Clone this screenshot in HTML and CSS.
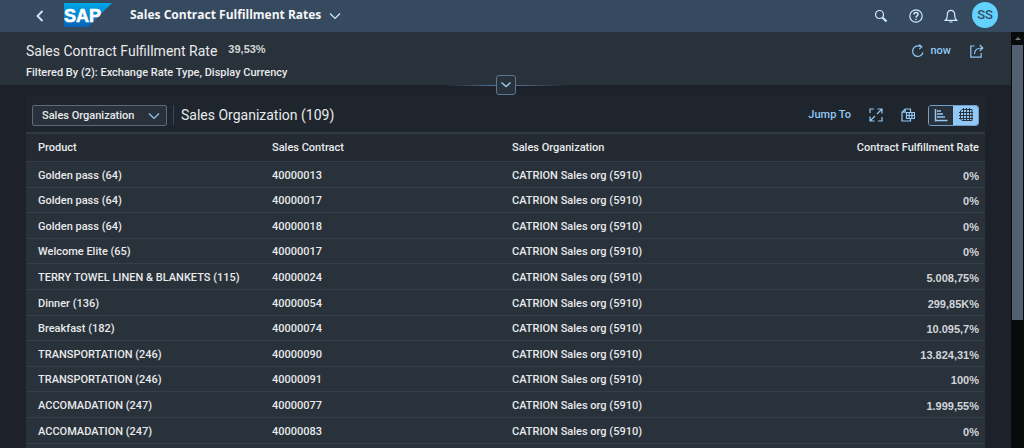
FILE: index.html
```html
<!DOCTYPE html>
<html lang="en">
<head>
<meta charset="utf-8">
<title>Sales Contract Fulfillment Rates</title>
<link rel="stylesheet" href="styles.css">
</head>
<body>
<header class="shell">
  <button class="icon-btn back" aria-label="Back"><svg width="10" height="14" viewBox="0 0 10 14"><path d="M7.500 2 2.500 7l5 5" stroke-width="1.800"/></svg></button>
  <a class="logo" href="#" aria-label="Home"><svg width="48" height="24" viewBox="0 0 48 24">
    <defs><linearGradient id="sap" x1="0" y1="0" x2="0" y2="1"><stop offset="0" stop-color="#00a8e8"/><stop offset="1" stop-color="#0a62b8"/></linearGradient></defs>
    <path class="logo-shape" d="M0 0h48L24 24H0z"/><text x="0" y="19">SAP</text></svg></a>
  <button class="app-title">Sales Contract Fulfillment Rates<svg width="12" height="8" viewBox="0 0 12 8"><path d="m1 1.500 5 5 5-5"/></svg></button>
  <nav class="shell-actions" aria-label="Shell">
    <button class="icon-btn" aria-label="Search"><svg width="14" height="14" viewBox="0 0 14 14"><circle cx="5.500" cy="5.500" r="4"/><path d="m8.500 8.500 4 4" stroke-width="2.200"/></svg></button>
    <button class="icon-btn" aria-label="Help"><svg width="14" height="14" viewBox="0 0 14 14"><circle cx="7" cy="7" r="6.200"/><path d="M5 5.500C5 2.800 9.100 2.900 9.100 5.300 9.100 6.900 7 6.700 7 8.500M7 9.700v1.400" stroke-width="1.500"/></svg></button>
    <button class="icon-btn" aria-label="Notifications"><svg width="14" height="14" viewBox="0 0 14 14"><path d="M1.500 11.300C3.500 9.500 3.200 8 3.300 5.500 3.500 2.600 5 1.300 7 1.300s3.500 1.300 3.700 4.200c.1 2.500-.2 4 1.800 5.800zM5.500 13h3"/></svg></button>
    <button class="avatar" aria-label="User SS">SS</button>
  </nav>
</header>
<div class="viewport">
  <main class="content">
    <section class="page-head">
      <div class="page-info">
        <h1>Sales Contract Fulfillment Rate <span class="kpi">39,53%</span></h1>
        <p>Filtered By (2): Exchange Rate Type, Display Currency</p>
      </div>
      <div class="page-actions">
        <button class="link-btn"><svg width="14" height="14" viewBox="0 0 14 14"><path d="M12 8.500A5.300 5.300 0 1 1 9.500 2.500M8.200.6l2.600 2.200-2.500 2.300"/></svg>now</button>
        <button class="link-btn" aria-label="Share"><svg width="14" height="14" viewBox="0 0 14 14"><path d="M4.500 2H.8v11.200h10.400V9M4.500 10c0-4 2.500-6 7.500-6M9.800 1l3 3-3 3"/></svg></button>
      </div>
      <button class="expander" aria-label="Expand header"><svg width="12" height="8" viewBox="0 0 12 8"><path d="m1.500 1.500 4.500 4 4.500-4" stroke-width="1.500"/></svg></button>
    </section>
    <section class="card">
      <div class="toolbar">
        <span class="select-wrap"><select aria-label="Group by"><option>Sales Organization</option></select><svg width="12" height="8" viewBox="0 0 12 8"><path d="m1 1.500 5 5 5-5"/></svg></span>
        <h2>Sales Organization (109)</h2>
        <div class="tools">
          <button class="link-btn">Jump To</button>
          <button class="link-btn" aria-label="Full screen"><svg width="14" height="14" viewBox="0 0 14 14"><path d="M5 1H1v4M9 13h4V9M8 6l4.500-4.500M8.500 1H13v4.500M6 8l-4.500 4.500M1 8.500V13h4.500"/></svg></button>
          <button class="link-btn" aria-label="Export"><svg width="14" height="14" viewBox="0 0 14 14"><path d="M9.500 10.500v2.500H1V4.200L4.200 1H9.500v3M4.200 1v3.200H1M5.500 4.500h8v6h-8zM5.500 7.500h8M8.200 4.500v6M10.900 4.500v6"/></svg></button>
          <div class="segmented">
            <button aria-label="Chart view"><svg width="14" height="14" viewBox="0 0 14 14"><path d="M1.500 1v12.500M1 12.500h12.500M3 3h4M3 6h6M3 9h8" stroke-width="1.500"/></svg></button>
            <button class="selected" aria-label="Table view" aria-pressed="true"><svg width="14" height="14" viewBox="0 0 14 14"><path d="M3 1.500h10v11H3L1.500 11V3zM0 4.500h14M0 7.500h14M0 10.500h14M4.500 0v13M7.500 0v13M10.500 0v13" stroke-width="1"/></svg></button>
          </div>
        </div>
      </div>
      <table>
        <thead><tr><th class="c-product">Product</th><th class="c-contract">Sales Contract</th><th>Sales Organization</th><th class="num">Contract Fulfillment Rate</th></tr></thead>
        <tbody>
          <tr><td>Golden pass (64)</td><td>40000013</td><td>CATRION Sales org (5910)</td><td class="num">0%</td></tr>
          <tr><td>Golden pass (64)</td><td>40000017</td><td>CATRION Sales org (5910)</td><td class="num">0%</td></tr>
          <tr><td>Golden pass (64)</td><td>40000018</td><td>CATRION Sales org (5910)</td><td class="num">0%</td></tr>
          <tr><td>Welcome Elite (65)</td><td>40000017</td><td>CATRION Sales org (5910)</td><td class="num">0%</td></tr>
          <tr><td>TERRY TOWEL LINEN &amp; BLANKETS (115)</td><td>40000024</td><td>CATRION Sales org (5910)</td><td class="num">5.008,75%</td></tr>
          <tr><td>Dinner (136)</td><td>40000054</td><td>CATRION Sales org (5910)</td><td class="num">299,85K%</td></tr>
          <tr><td>Breakfast (182)</td><td>40000074</td><td>CATRION Sales org (5910)</td><td class="num">10.095,7%</td></tr>
          <tr><td>TRANSPORTATION (246)</td><td>40000090</td><td>CATRION Sales org (5910)</td><td class="num">13.824,31%</td></tr>
          <tr><td>TRANSPORTATION (246)</td><td>40000091</td><td>CATRION Sales org (5910)</td><td class="num">100%</td></tr>
          <tr><td>ACCOMADATION (247)</td><td>40000077</td><td>CATRION Sales org (5910)</td><td class="num">1.999,55%</td></tr>
          <tr><td>ACCOMADATION (247)</td><td>40000083</td><td>CATRION Sales org (5910)</td><td class="num">0%</td></tr>
        </tbody>
      </table>
    </section>
  </main>
  <div class="scrollbar" aria-hidden="true"><span class="arrow"></span><span class="thumb"></span></div>
</div>
</body>
</html>
```
FILE: styles.css
```css
* { box-sizing: border-box; }
body {
  margin: 0;
  height: 100vh;
  display: flex;
  flex-direction: column;
  overflow: hidden;
  background: #1d2129;
  color: #e8eaec;
  font: 500 11px/16px Roboto, "Liberation Sans", sans-serif;
}
h1, h2, p { margin: 0; }
button, select { font: inherit; color: inherit; background: none; border: 0; padding: 0; }
button { display: inline-flex; align-items: center; justify-content: center; cursor: pointer; }
svg { display: block; fill: none; stroke: currentColor; stroke-width: 1.2; }

.shell { display: flex; flex: none; align-items: center; height: 32px; padding: 0 26px; background: #354a5f; color: #d1e8ff; }
.icon-btn { width: 28px; height: 28px; }
.logo { margin: 0 18px 3px 10px; }
.logo svg { stroke: none; }
.logo-shape { fill: url(#sap); }
.logo text { fill: #fff; stroke: #fff; stroke-width: 0.6; font: 700 18px "Liberation Sans", sans-serif; }
.app-title { gap: 8px; margin-bottom: 2px; color: #f5f6f7; font: 700 12px/18px "Open Sans", sans-serif; }
.app-title svg { margin-top: 2px; color: #d1e8ff; }
.shell-actions { display: flex; align-items: center; gap: 7px; margin-left: auto; }
.avatar { width: 26px; height: 26px; margin-bottom: 3px; border-radius: 50%; background: #64d2ff; color: #354a5f; font-size: 13px; }

.viewport { display: flex; flex: 1; min-height: 0; }
.content { flex: 1; min-width: 0; overflow: hidden; }
.page-head { position: relative; display: flex; justify-content: space-between; height: 53px; padding: 9px 27px 0 26px; background: #29313a; }
h1 { display: flex; gap: 11px; font-size: 14px; font-weight: 400; line-height: 20px; }
.kpi { color: #d3d6d9; font: 700 11px/16px "Liberation Sans", sans-serif; }
.page-info p { margin-top: 4px; }
.page-actions { display: flex; gap: 19px; height: 20px; }
.link-btn { gap: 5px; color: #91c8f6; }
.expander { position: absolute; z-index: 1; left: 50%; bottom: -10px; width: 20px; height: 20px; transform: translateX(-50%); border: 1px solid #5b7690; border-radius: 3px; background: #29313a; color: #91c8f6; }
.expander::before, .expander::after { content: ""; position: absolute; top: 9px; width: 52px; height: 1px; }
.expander::before { right: 100%; background: linear-gradient(to left, #52789b, transparent); }
.expander::after { left: 100%; background: linear-gradient(to right, #52789b, transparent); }

.card { margin: 10px 26px 0; background: #1e252c; }
.toolbar { display: flex; align-items: center; height: 37px; padding: 3px 6px 0; }
.select-wrap { position: relative; }
.select-wrap select { appearance: none; display: block; width: 135px; height: 21px; padding: 1px 9px 0; border: 1px solid #5b6b7a; border-radius: 2px; background: #29313a; }
.select-wrap svg { position: absolute; right: 7px; top: 7px; color: #91c8f6; pointer-events: none; }
h2 { margin-left: 6px; padding-left: 7px; border-left: 1px solid #3b4855; font-size: 14px; font-weight: 400; line-height: 20px; }
.tools { display: flex; align-items: center; gap: 18px; margin-left: auto; }
.segmented { display: flex; margin-left: -5px; border: 1px solid #6f9fca; border-radius: 3px; overflow: hidden; }
.segmented button { width: 24px; height: 19px; background: #29313a; color: #91c8f6; }
.segmented .selected { width: 25px; background: #91c8f6; color: #29313a; }

table { width: 100%; border-collapse: separate; border-spacing: 0; table-layout: fixed; border-top: 2px solid #303943; background: #29313a; }
th, td { padding: 0 6px 0 0; text-align: left; font-weight: 500; white-space: nowrap; border-bottom: 1px solid #343d48; }
th { height: 28px; background: #232a32; }
td { height: 26px; padding-top: 2px; }
tr:nth-child(5n+2) td, tr:nth-child(5n+4) td { height: 25px; }
tr > :first-child { padding-left: 12px; }
.c-product { width: 246px; }
.c-contract { width: 240px; }
.num { text-align: right; }
td.num { color: #d3d6d9; font-family: "Liberation Sans", sans-serif; font-weight: 700; }
tbody::after { content: ""; display: table-row; height: 26px; }

.scrollbar { display: flex; flex-direction: column; align-items: center; flex: none; width: 13px; background: #090a0c; }
.arrow { flex: none; margin: 5px 0; border: 3px solid transparent; border-top: 0; border-bottom: 3px solid #6b7680; }
.thumb { width: 11px; height: 66%; background: #526072; }
```
